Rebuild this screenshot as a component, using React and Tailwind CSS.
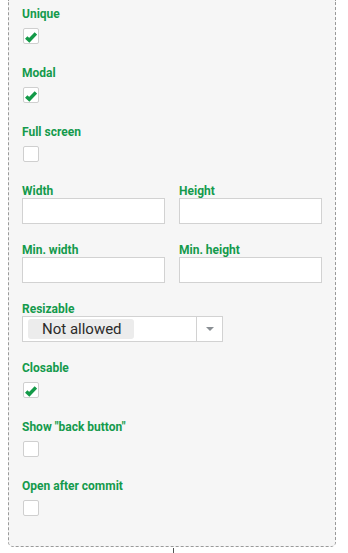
import { useState } from "react";

const labelCls =
  "block h-[14px] text-[12px] leading-[14px] font-bold text-[#149a4c] whitespace-nowrap";

function Check({ checked }) {
  return (
    <div className="mt-[7px] ml-px w-4 h-4 rounded-[2px] border border-[#cfcfcf] bg-white flex items-center justify-center">
      {checked && (
        <svg width="12" height="12" viewBox="0 0 12 12" className="mt-px">
          <path
            d="M1.2 6.4 L4.3 9.3 L10.9 2.4"
            fill="none"
            stroke="#139a48"
            strokeWidth="3.4"
          />
        </svg>
      )}
    </div>
  );
}

function CheckField({ label, checked }) {
  return (
    <div className="h-[59px] flex flex-col">
      <span className={labelCls}>{label}</span>
      <Check checked={checked} />
    </div>
  );
}

function InputField({ label }) {
  return (
    <div className="h-[59px] flex flex-col">
      <span className={labelCls}>{label}</span>
      <div className="h-[26px] w-full border border-[#d2d2d2] bg-white" />
    </div>
  );
}

export default function App() {
  const [fields] = useState([
    { label: "Unique", checked: true },
    { label: "Modal", checked: true },
    { label: "Full screen", checked: false },
  ]);

  return (
    <div className="w-[348px] h-[553px] bg-white overflow-hidden" style={{ fontFamily: "Roboto, 'Liberation Sans', sans-serif" }}>
      <div className="ml-[8px] w-[328px] bg-[#f6f6f6] border border-t-0 border-dashed border-[#9a9a9a] rounded-b-[5px] pt-[7px] pl-[13px] pr-[13px] pb-[8px]">
        {fields.map((f) => (
          <CheckField key={f.label} label={f.label} checked={f.checked} />
        ))}

        <div className="grid grid-cols-2 gap-x-[14px]">
          <InputField label="Width" />
          <InputField label="Height" />
          <InputField label="Min. width" />
          <InputField label="Min. height" />
        </div>

        <div className="h-[59px] flex flex-col">
          <span className={labelCls}>Resizable</span>
          <div className="h-[26px] w-[201px] border border-[#d2d2d2] bg-white flex">
            <div className="flex-1 flex items-center pl-[5px]">
              <div className="h-[20px] w-[106px] bg-[#ececec] rounded-[3px] pl-[14px] text-[15px] leading-[20px] text-[#2b2b2b]">
                Not allowed
              </div>
            </div>
            <div className="w-[26px] border-l border-[#d2d2d2] flex items-center justify-center">
              <svg width="10" height="6" viewBox="0 0 10 6">
                <path d="M1 1 L9 1 L5 5 Z" fill="#8a8f94" />
              </svg>
            </div>
          </div>
        </div>

        <CheckField label="Closable" checked />
        <CheckField label={'Show "back button"'} checked={false} />
        <CheckField label="Open after commit" checked={false} />
      </div>
      <div className="ml-[173px] mt-px w-px h-2 bg-[#555]" />
    </div>
  );
}
